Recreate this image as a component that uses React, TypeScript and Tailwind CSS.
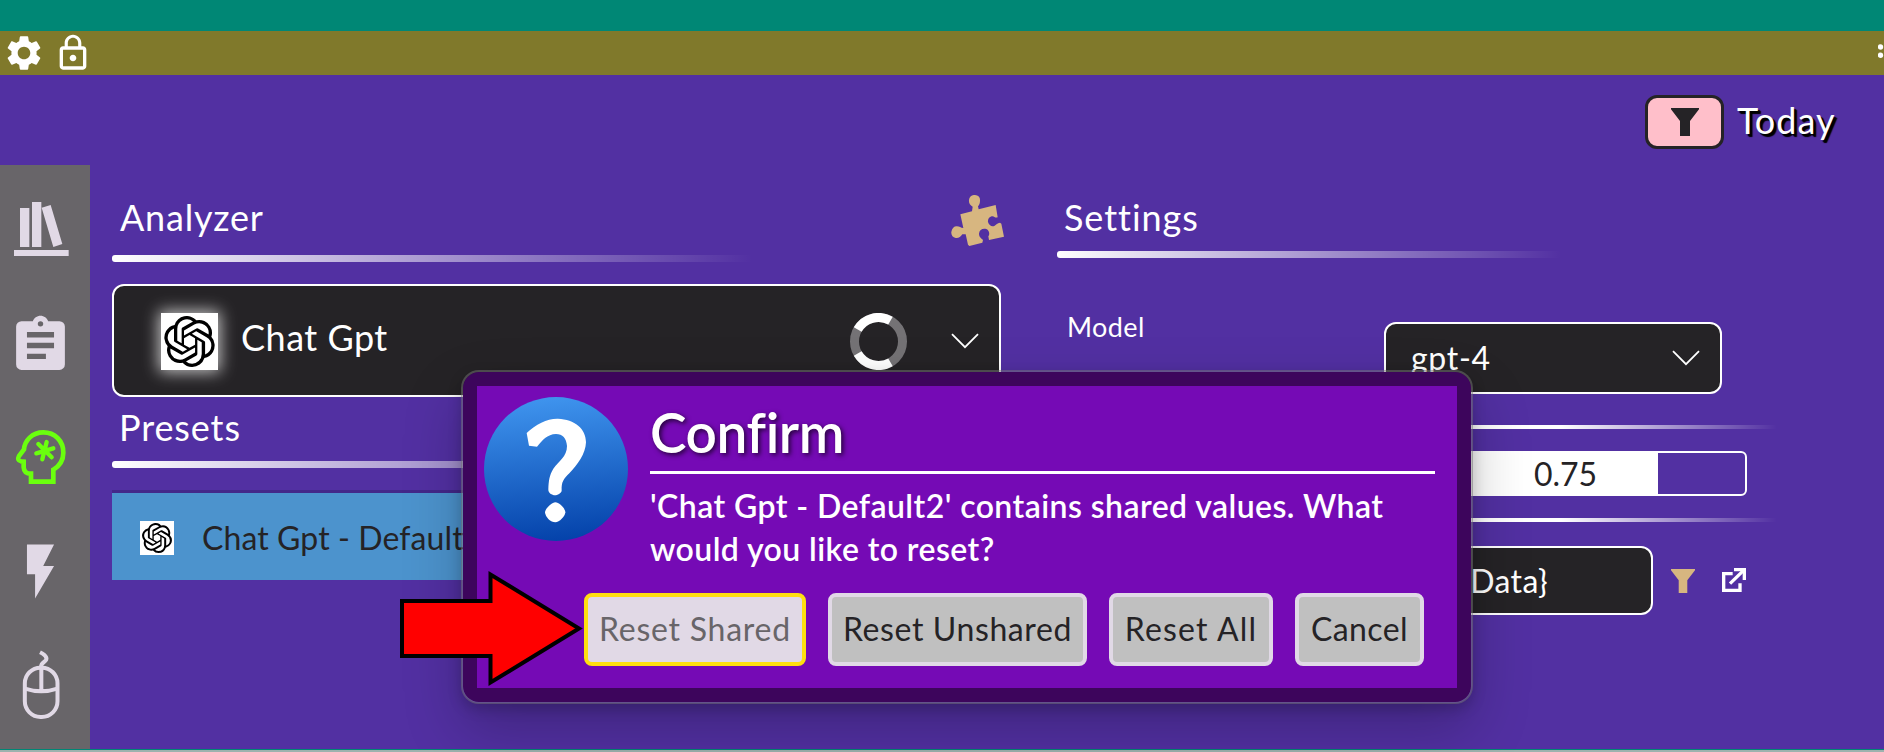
import React from "react";
import { SiOpenai } from "react-icons/si";
import { MdSettings, MdLockOutline } from "react-icons/md";

function Chevron() {
  return (
    <svg width="28" height="16" viewBox="0 0 28 16" fill="none" stroke="currentColor" strokeWidth="1.8">
      <path d="M1 1.2 14 14.2 27 1.2" />
    </svg>
  );
}

function Funnel({ size, className }: { size: number; className: string }) {
  return (
    <svg width={size} height={size} viewBox="0 0 84 84" className={className} fill="currentColor">
      <path d="M0 0H84V4L57 39V84H27V39L0 4Z" />
    </svg>
  );
}

function Puzzle() {
  return (
    <svg width="53" height="51" viewBox="33 30 159 153" className="-mt-px -mr-[3px] shrink-0" fill="#d7b680">
      <path d="M61 88 96 79 98 65C90 60 86 54 87 45 88 35 96 29 105 30 116 31 121 38 120 47 120 55 118 59 114 64L116 73 167 60 173 97C164 100 163 92 155 94 147 96 143 103 144 111 147 122 156 126 164 122 170 118 171 114 180 113L184 116 192 155 147 165 145 154C150 148 148 136 139 132 128 129 118 134 117 146 117 158 126 160 129 165L127 173 88 183 84 179 77 148 67 148C62 156 56 160 47 159 38 157 33 150 34 141 36 130 42 124 50 124 59 124 62 129 70 129Z" />
    </svg>
  );
}

function Spinner() {
  return (
    <svg width="57" height="57" viewBox="0 0 57 57" className="relative top-px" fill="none" strokeWidth="9">
      <circle cx="28.5" cy="28.5" r="24" stroke="#747275" />
      <path d="M7.7 16.5A24 24 0 0 1 40.5 7.7M40.5 49.3A24 24 0 0 1 7.7 40.5" stroke="#fff" />
    </svg>
  );
}

function Sidebar() {
  return (
    <nav className="flex w-[90px] shrink-0 flex-col bg-[#686569] text-[#e1d9e6]">
      <svg className="mt-[37px] shrink-0" width="90" height="54" viewBox="0 606 270 162" fill="currentColor">
        <path d="M60 624H88V741H60ZM96 606H124V741H96ZM125 623 152 615 187 732 160 741ZM42 750H206V768H42Z" />
      </svg>
      <svg className="mt-[57px] ml-2 shrink-0" width="65" height="65" viewBox="0 0 24 24" fill="currentColor">
        <path d="M17,9H7V7H17M17,13H7V11H17M14,17H7V15H14M12,3A1,1 0 0,1 13,4A1,1 0 0,1 12,5A1,1 0 0,1 11,4A1,1 0 0,1 12,3M19,3H14.82C14.4,1.84 13.3,1 12,1C10.7,1 9.6,1.84 9.18,3H5A2,2 0 0,0 3,5V19A2,2 0 0,0 5,21H19A2,2 0 0,0 21,19V5A2,2 0 0,0 19,3Z" />
      </svg>
      <svg className="mt-[42px] shrink-0" width="90" height="76" viewBox="0 0 270 228" fill="none" stroke="#6aff0e" strokeWidth="14">
        <path d="M93 185H160V149C178 138 190 122 190 98 190 62 164 37 130 37 96 37 74 62 72 88L57 108Q50 121 63 124L71 125V142C72 156 82 161 93 161Z" />
        <path d="M140 66 127 118M109 100 160 85M115 72 155 112" strokeWidth="13" strokeLinecap="round" />
      </svg>
      <svg className="mt-[43px] ml-2 shrink-0" width="65" height="65" viewBox="0 0 24 24" fill="currentColor">
        <path d="M7 2v11h3v9l7-12h-4l4-8z" />
      </svg>
      <svg className="mt-[42px] shrink-0" width="90" height="77" viewBox="0 438 270 231" fill="none" stroke="currentColor" strokeWidth="12">
        <rect x="74.500" y="503" width="98" height="148" rx="47" />
        <path d="M75 566Q124 582 172 566M124 503V572M120 457C142 468 144 478 132 486Q123 492 123 502" />
      </svg>
    </nav>
  );
}

function AnalyzerColumn() {
  return (
    <section className="ml-[22px] flex w-[889px] shrink-0 flex-col pt-[31px]">
      <div className="flex h-10 justify-between pl-2">
        <h2 className="pt-px text-[36px] leading-10 tracking-[0.8px]">Analyzer</h2>
        <Puzzle />
      </div>
      <div className="mt-[19px] h-[7px] rounded-l-[3px] bg-linear-to-r from-white to-transparent to-72%" />
      <div className="mt-[22px] flex h-[113px] items-center rounded-xl border-2 border-white bg-[#252326] pr-[20px] pl-[47px]">
        <div className="mt-[2px] flex size-[57px] items-center justify-center bg-white text-black shadow-[0_0_15px_2px_rgba(255,255,255,0.75)]">
          <SiOpenai size={51} />
        </div>
        <span className="-mt-2 ml-[23px] text-[36px] leading-10 tracking-[0.5px]">Chat Gpt</span>
        <div className="ml-auto flex items-center gap-[44px]">
          <Spinner />
          <Chevron />
        </div>
      </div>
      <h2 className="mt-[10px] pl-[7px] text-[36px] leading-10 tracking-[0.9px]">Presets</h2>
      <div className="mt-[14px] h-[7px] rounded-l-[3px] bg-linear-to-r from-white to-transparent to-72%" />
      <div className="mt-[22px] flex h-[90px] items-center border-t-[3px] border-[#43288a] bg-[#4c93cd] pl-7 text-[#252326]">
        <div className="mt-[2px] flex size-[34px] items-center justify-center bg-white text-black">
          <SiOpenai size={30} />
        </div>
        <span className="mt-[2px] ml-[28px] text-[32px] leading-10 tracking-[0.1px]">Chat Gpt - Default2</span>
      </div>
    </section>
  );
}

function SettingsColumn() {
  return (
    <section className="ml-[56px] flex w-[720px] shrink-0 flex-col pt-[31px]">
      <h2 className="pt-px pl-[7px] text-[36px] leading-10 tracking-[0.95px]">Settings</h2>
      <div className="mt-[14px] h-[7px] rounded-l-[3px] bg-linear-to-r from-white to-transparent to-70%" />
      <div className="mt-[52px] flex pl-[10px]">
        <span className="w-[317px] pt-px text-[27px] leading-8 tracking-[0.4px]">Model</span>
        <div className="mt-3 flex h-[72px] w-[338px] items-center justify-between rounded-xl border-2 border-white bg-[#252326] pr-5 pl-[25px]">
          <span className="text-[32px] leading-10 tracking-[0.7px]">gpt-4</span>
          <Chevron />
        </div>
      </div>
      <div className="mt-[31px] h-1 bg-linear-to-r from-white from-70% to-transparent" />
      <div className="mt-[22px] ml-[327px] flex h-[45px] w-[363px] items-center justify-center rounded-md border-2 border-white bg-linear-to-r from-white from-[75.7%] to-transparent to-[75.7%]">
        <span className="text-[32px] leading-10 text-[#252326]">0.75</span>
      </div>
      <div className="mt-[22px] h-1 bg-linear-to-r from-white from-70% to-transparent" />
      <div className="mt-[24px] ml-[327px] flex items-center">
        <div className="flex h-[69px] w-[269px] items-center justify-end rounded-xl border-2 border-white bg-[#252326] pr-[103px]">
          <span className="text-[32px] leading-10 tracking-[0.4px]">{"{Data}"}</span>
        </div>
        <Funnel size={24} className="ml-[18px] text-[#d7b680]" />
        <svg className="relative -top-px ml-[27px]" width="24" height="24" viewBox="0 0 72 72" fill="none" stroke="white" strokeWidth="10">
          <path d="M32 17H5V67H54V46M24 47 64 8" />
          <path d="M36 5H67V36" />
        </svg>
      </div>
    </section>
  );
}

function ConfirmDialog() {
  const button = "h-[73px] rounded-lg border-4 text-[32px] leading-10 whitespace-nowrap";
  const plain = "border-[#e1d9e6] bg-[#c0c0c0] text-[#252326]";
  return (
    <div className="absolute top-[370px] left-[461px] h-[334px] w-[1012px] rounded-[18px] border-2 border-[#757575]/50 bg-[#3d055c] bg-clip-padding p-[14px] shadow-[0_26px_58px_rgba(0,0,0,0.22),0_5px_14px_rgba(0,0,0,0.18)]">
      <div className="flex h-[302px] flex-col bg-[#750ab5]">
        <div className="flex">
          <svg className="mt-[11px] ml-[7px] shrink-0" width="144" height="144" viewBox="24 21 432 432">
            <defs>
              <linearGradient id="disc" x1="0.45" y1="0" x2="0.55" y2="1">
                <stop offset="0" stopColor="#3f94ee" />
                <stop offset="1" stopColor="#0442aa" />
              </linearGradient>
            </defs>
            <circle cx="240" cy="237" r="216" fill="url(#disc)" />
            <path fill="#fff" d="M152 129C180 102 214 85 246 86 296 88 330 116 330 157 329 192 304 224 280 250 262 268 256 276 257 302 256 310 244 315 237 316 228 316 216 309 217 298 218 272 220 256 232 236 248 214 273 200 273 168 271 144 260 132 240 132 214 132 198 152 183 170L159 167Z" />
            <path fill="#fff" d="M207 367C208 355 228 337 238 337 250 337 268 356 268 367 267 380 250 397 238 397 224 397 208 382 207 367Z" />
          </svg>
          <div className="ml-[22px] w-[785px]">
            <h1 className="mt-[13px] h-[69px] text-[55px] leading-[66px] font-semibold tracking-[-0.4px] [text-shadow:2px_2px_5px_rgba(0,0,0,0.7)]">Confirm</h1>
            <div className="mt-[3px] h-[3px] bg-white" />
            <p className="mt-[10px] text-[32px] leading-[43px] font-semibold tracking-[0.43px]">
              'Chat Gpt - Default2' contains shared values. What
              <br />
              would you like to reset?
            </p>
          </div>
        </div>
        <div className="mt-[23px] ml-[107px] flex gap-[22px]">
          <button className={`${button} w-[222px] border-[#ffdf0f] bg-[#e1d9e6] pb-0.5 tracking-[0.75px] text-[#686569]`}>Reset Shared</button>
          <button className={`${button} ${plain} w-[259px] pb-0.5 tracking-[0.6px]`}>Reset Unshared</button>
          <button className={`${button} ${plain} w-[164px] pb-0.5 tracking-[1.2px]`}>Reset All</button>
          <button className={`${button} ${plain} w-[129px] pb-0.5 tracking-[0.4px]`}>Cancel</button>
        </div>
      </div>
    </div>
  );
}

export default function App() {
  return (
    <div className="relative flex h-[752px] w-full flex-col overflow-hidden bg-[#5230a2] font-['Lato',sans-serif] text-white">
      <div className="h-[31px] shrink-0 bg-[#008775]" />
      <div className="flex h-11 shrink-0 items-start bg-[#80792b]">
        <MdSettings size={42} className="mt-px ml-[3px] shrink-0" />
        <MdLockOutline size={40} className="mt-[2px] ml-[8px] shrink-0" />
        <svg className="mt-[13px] ml-auto shrink-0" width="6" height="14" viewBox="0 0 6 14" fill="currentColor">
          <circle cx="2.500" cy="3" r="2.700" />
          <circle cx="2.500" cy="11.300" r="2.700" />
        </svg>
      </div>
      <header className="flex h-[90px] shrink-0 items-start justify-end pt-5 pr-12">
        <button className="flex h-[54px] w-[79px] items-center justify-center rounded-xl border-[3px] border-[#252326] bg-[#ffbfca]">
          <Funnel size={28} className="text-[#252326]" />
        </button>
        <span className="mt-[5px] ml-[13px] w-[99px] text-[36px] leading-10 tracking-[1px] [text-shadow:2px_2px_1px_black,3px_3px_1px_black]">Today</span>
      </header>
      <main className="flex h-[584px] shrink-0">
        <Sidebar />
        <AnalyzerColumn />
        <SettingsColumn />
      </main>
      <div className="h-[3px] shrink-0 border-t border-[#008775] bg-[#9db2ae]" />
      <ConfirmDialog />
      <svg className="absolute top-[570px] left-[400px]" width="184" height="118" viewBox="0 0 184 118">
        <path d="M2 31H90.500V4.500L179 58.500 90.500 112.500V86H2Z" fill="#f00" stroke="#000" strokeWidth="4" />
      </svg>
    </div>
  );
}
